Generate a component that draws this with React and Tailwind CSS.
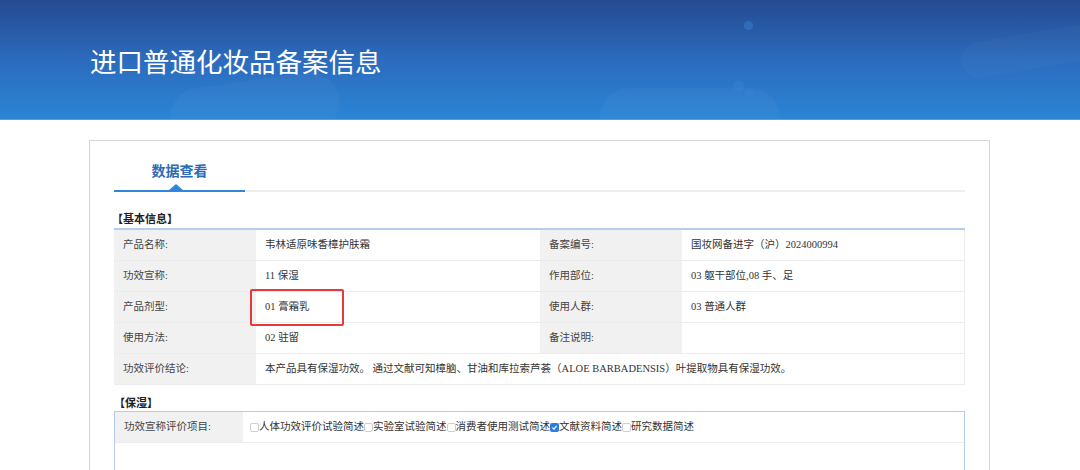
import React from 'react';

const font = { fontFamily: '"Liberation Serif", "Noto Sans CJK SC", serif' };

const rows = [
    ['产品名称:', '韦林适原味香樟护肤霜', '备案编号:', '国妆网备进字（沪）2024000994'],
    ['功效宣称:', '11 保湿', '作用部位:', '03 躯干部位,08 手、足'],
    ['产品剂型:', '01 膏霜乳', '使用人群:', '03 普通人群'],
    ['使用方法:', '02 驻留', '备注说明:', ''],
];

const checks = [
    ['人体功效评价试验简述', false],
    ['实验室试验简述', false],
    ['消费者使用测试简述', false],
    ['文献资料简述', true],
    ['研究数据简述', false],
];

const Label = ({ children, w = 'w-[142px]' }) => (
    <div className={`${w} shrink-0 bg-[#f1f1f1] pl-[9px] flex items-center text-[#444]`}>{children}</div>
);

const App = () => {
    return (
        <div className="w-[1080px] h-[470px] overflow-hidden bg-white text-[10.5px] text-[#333]" style={font}>
            <div className="relative h-[120px] overflow-hidden bg-gradient-to-b from-[#254b91] via-[#2c6bbd] to-[#2a85d5] border-b border-[#5b9be0]">
                <div className="absolute left-[170px] top-[80px] w-[170px] h-[60px] rounded-[40px] bg-white/[0.03] rotate-[-8deg]"></div>
                <div className="absolute left-[600px] top-[88px] w-[180px] h-[60px] rounded-full bg-white/[0.03]"></div>
                <div className="absolute left-[960px] top-[28px] w-[200px] h-[36px] rounded-full bg-white/[0.025] rotate-[-10deg]"></div>
                <div className="absolute left-[744px] top-[21px] w-[9px] h-[9px] rounded-full bg-[#3a7fd0]/50"></div>
                <div className="absolute left-[733px] top-[81px] w-[11px] h-[11px] rounded-full bg-[#3a80d8]/50"></div>
                <div className="absolute left-[746px] top-[89px] w-[8px] h-[8px] rounded-full bg-[#3a80d8]/50"></div>
                <h1 className="relative pl-[90px] pt-[44px] text-[26.5px] leading-[38px] text-white">进口普通化妆品备案信息</h1>
            </div>

            <div className="ml-[89px] mt-[20px] w-[901px] h-[400px] border border-[#d6d6d6] bg-white px-[24px]">
                <div className="relative flex h-[51px]">
                    <div className="relative w-[131px] h-full flex items-start justify-center pt-[20px] text-[14px] font-bold text-[#2b6cb5]">
                        数据查看
                        <div className="absolute left-[55px] bottom-[2px] w-0 h-0 border-l-[7px] border-r-[7px] border-b-[6px] border-l-transparent border-r-transparent border-b-[#2f86dc]"></div>
                        <div className="absolute left-0 bottom-0 w-full h-[2px] bg-[#2f86dc]"></div>
                    </div>
                    <div className="flex-1 self-end h-[2px] bg-[#eeeeee]"></div>
                </div>

                <div className="mt-[20px] font-bold text-[11px] leading-[14px] text-[#222] -ml-[2px]">【基本信息】</div>
                <div className="mt-[2px] border-t-2 border-[#b4cdee]">
                    {rows.map(([l1, v1, l2, v2], i) => (
                        <div key={i} className="flex h-[31px] border-b border-[#ececec]">
                            <Label>{l1}</Label>
                            <div className="relative w-[284px] shrink-0 pl-[9px] flex items-center bg-white">
                                {v1}
                                {i === 2 && (
                                    <div className="absolute z-10 -left-[6px] -top-[3px] w-[94px] h-[37px] border-2 border-[#e8393a] rounded-[2px]"></div>
                                )}
                            </div>
                            <Label>{l2}</Label>
                            <div className="flex-1 pl-[9px] flex items-center bg-white border-r border-[#ececec]">{v2}</div>
                        </div>
                    ))}
                    <div className="flex h-[31px] border-b border-[#ececec]">
                        <Label>功效评价结论:</Label>
                        <div className="flex-1 pl-[9px] flex items-center bg-white border-r border-[#ececec]">
                            本产品具有保湿功效。 通过文献可知樟脑、甘油和库拉索芦荟（ALOE BARBADENSIS）叶提取物具有保湿功效。
                        </div>
                    </div>
                </div>

                <div className="mt-[11px] font-bold text-[11px] leading-[14px] text-[#222]">【保湿】</div>
                <div className="mt-[1px] h-[80px] border border-[#b4cdee]">
                    <div className="flex h-[31px] border-b border-[#ececec]">
                        <Label w="w-[128px]">功效宣称评价项目:</Label>
                        <div className="flex-1 pl-[7px] flex items-center bg-white">
                            {checks.map(([t, on]) => (
                                <span key={t} className="flex items-center">
                                    {on ? (
                                        <span className="w-[9px] h-[9px] rounded-[2px] bg-[#2f7de1] flex items-center justify-center">
                                            <svg viewBox="0 0 10 10" className="w-[7px] h-[7px]"><path d="M2 5.2 L4.2 7.3 L8 2.6" stroke="white" strokeWidth="1.6" fill="none" /></svg>
                                        </span>
                                    ) : (
                                        <span className="w-[9px] h-[9px] rounded-[2px] border border-[#cfcfcf] bg-white"></span>
                                    )}
                                    <span>{t}</span>
                                </span>
                            ))}
                        </div>
                    </div>
                </div>
            </div>
        </div>
    );
};

export default App;
